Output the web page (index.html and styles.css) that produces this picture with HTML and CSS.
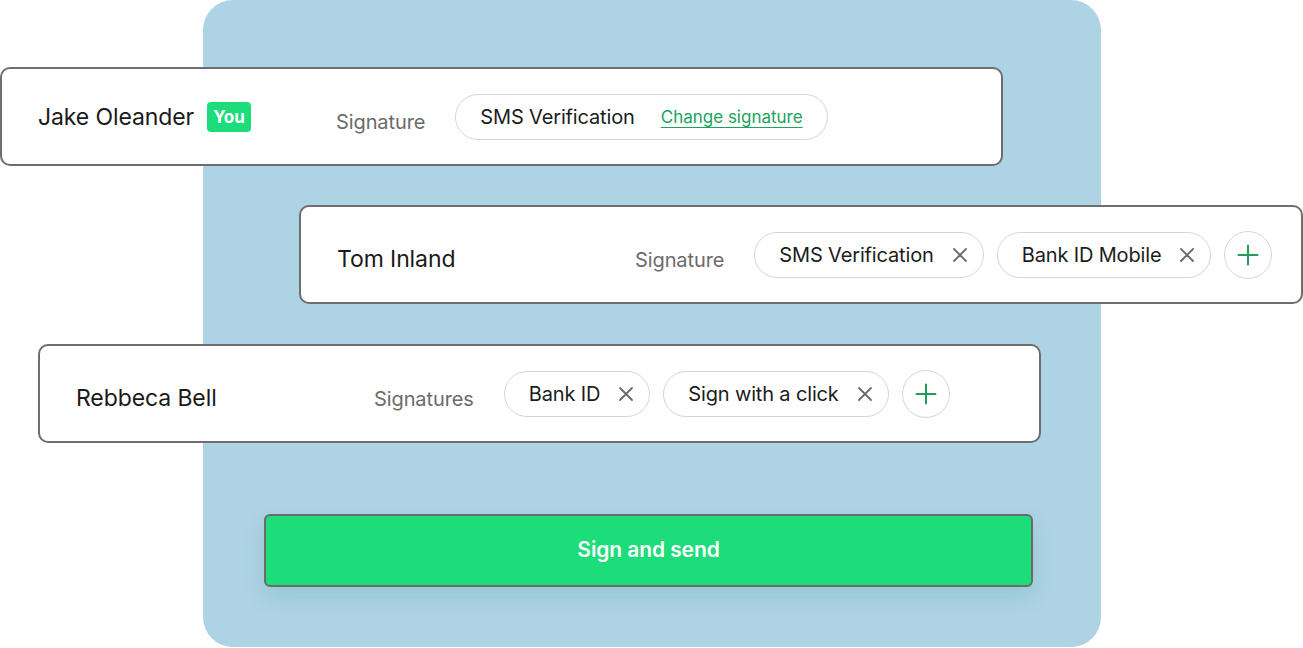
FILE: index.html
```html
<!DOCTYPE html>
<html lang="en">
<head>
<meta charset="utf-8">
<title>Signers</title>
<link rel="stylesheet" href="styles.css">
</head>
<body>
<div class="stage">
  <div class="panel"></div>
  <div class="stack">
    <div class="card card-jake">
      <div class="who">
        <span class="name">Jake Oleander</span>
        <span class="you">You</span>
      </div>
      <span class="label">Signature</span>
      <div class="chips">
        <div class="chip chip-wide">
          <span class="chip-text">SMS Verification</span>
          <a class="change" href="#">Change signature</a>
        </div>
      </div>
    </div>

    <div class="card card-tom">
      <div class="who"><span class="name name-low">Tom Inland</span></div>
      <span class="label">Signature</span>
      <div class="chips">
        <div class="chip">
          <span class="chip-text">SMS Verification</span>
          <svg class="x" viewBox="0 0 16 16" width="16" height="16"><path d="M2 2L14 14M14 2L2 14" stroke="#6a6a6a" stroke-width="1.8" stroke-linecap="round" fill="none"/></svg>
        </div>
        <div class="chip">
          <span class="chip-text">Bank ID Mobile</span>
          <svg class="x" viewBox="0 0 16 16" width="16" height="16"><path d="M2 2L14 14M14 2L2 14" stroke="#6a6a6a" stroke-width="1.8" stroke-linecap="round" fill="none"/></svg>
        </div>
        <div class="add">
          <svg viewBox="0 0 22 22" width="22" height="22"><path d="M11 1.5V20.5M1.5 11H20.5" stroke="#1f9d57" stroke-width="2" stroke-linecap="round" fill="none"/></svg>
        </div>
      </div>
    </div>

    <div class="card card-rebbeca">
      <div class="who"><span class="name name-low">Rebbeca Bell</span></div>
      <span class="label">Signatures</span>
      <div class="chips">
        <div class="chip">
          <span class="chip-text">Bank ID</span>
          <svg class="x" viewBox="0 0 16 16" width="16" height="16"><path d="M2 2L14 14M14 2L2 14" stroke="#6a6a6a" stroke-width="1.8" stroke-linecap="round" fill="none"/></svg>
        </div>
        <div class="chip">
          <span class="chip-text">Sign with a click</span>
          <svg class="x" viewBox="0 0 16 16" width="16" height="16"><path d="M2 2L14 14M14 2L2 14" stroke="#6a6a6a" stroke-width="1.8" stroke-linecap="round" fill="none"/></svg>
        </div>
        <div class="add">
          <svg viewBox="0 0 22 22" width="22" height="22"><path d="M11 1.5V20.5M1.5 11H20.5" stroke="#1f9d57" stroke-width="2" stroke-linecap="round" fill="none"/></svg>
        </div>
      </div>
    </div>

    <button class="send">Sign and send</button>
  </div>
</div>
</body>
</html>
```

FILE: styles.css
```css
* { box-sizing: border-box; }
html, body { margin: 0; padding: 0; background: #ffffff; }
body {
  font-family: Inter, "Liberation Sans", sans-serif;
  color: #1c1c1c;
  width: 1303px;
  height: 648px;
  overflow: hidden;
}
.stage {
  position: relative;
  width: 1303px;
  height: 648px;
  padding-top: 67px;
}
.panel {
  position: absolute;
  left: 203px;
  top: 0;
  width: 898px;
  height: 647px;
  border-radius: 30px;
  background: #aed3e4;
}
.stack {
  position: relative;
  display: flex;
  flex-direction: column;
  align-items: flex-start;
}
.card {
  display: flex;
  align-items: center;
  width: 1003px;
  height: 99px;
  padding: 0 36px;
  background: #ffffff;
  border: 2px solid #6e6e6e;
  border-radius: 10px;
  white-space: nowrap;
}
.card-jake { margin-left: 0; }
.card-tom { margin-left: 299px; margin-top: 39px; width: 1004px; }
.card-rebbeca { margin-left: 38px; margin-top: 40px; }
.who {
  width: 298px;
  flex: none;
  display: flex;
  align-items: center;
  gap: 13px;
}
.name {
  font-size: 23px;
  font-weight: 400;
  letter-spacing: -0.1px;
  color: #1a1a1a;
}
.name-low { margin-top: 9px; }
.you {
  background: #1ddd7a;
  color: #ffffff;
  font-size: 17px;
  font-weight: 700;
  border-radius: 4px;
  height: 30px;
  padding: 0 6px;
  display: flex;
  align-items: center;
}
.label {
  flex: none;
  font-size: 20px;
  color: #6b6b6b;
  margin-right: 30px;
  margin-top: 10px;
  letter-spacing: -0.1px;
}
.chips {
  flex: none;
  display: flex;
  align-items: center;
  gap: 13px;
}
.chip {
  flex: none;
  display: flex;
  align-items: center;
  height: 46px;
  padding: 0 15px 0 24px;
  border: 1.5px solid #d7d5cf;
  border-radius: 23px;
  gap: 18px;
  background: #fff;
}
.chip-wide { padding-right: 24px; gap: 26px; }
.chip-text {
  font-size: 20px;
  color: #1c1c1c;
  letter-spacing: -0.15px;
}
.x { display: block; flex: none; }
.change {
  font-size: 17px;
  color: #1aa35c;
  text-decoration: underline;
  text-underline-offset: 4px;
  text-decoration-thickness: 1px;
}
.add {
  flex: none;
  width: 48px;
  height: 48px;
  border-radius: 50%;
  border: 1.5px solid #d7d5cf;
  display: flex;
  align-items: center;
  justify-content: center;
  background: #fff;
}
.add svg { display: block; }
.send {
  margin-left: 264px;
  margin-top: 71px;
  width: 769px;
  height: 73px;
  background: #1ddd7a;
  border: 2px solid #6b6b6b;
  border-radius: 6px;
  color: #ffffff;
  font-family: Inter, "Liberation Sans", sans-serif;
  font-size: 21px;
  font-weight: 600;
  letter-spacing: -0.1px;
  padding-top: 0;
  padding-bottom: 3px;
  box-shadow: 0 10px 20px rgba(40, 150, 120, 0.18);
  cursor: pointer;
}
```
